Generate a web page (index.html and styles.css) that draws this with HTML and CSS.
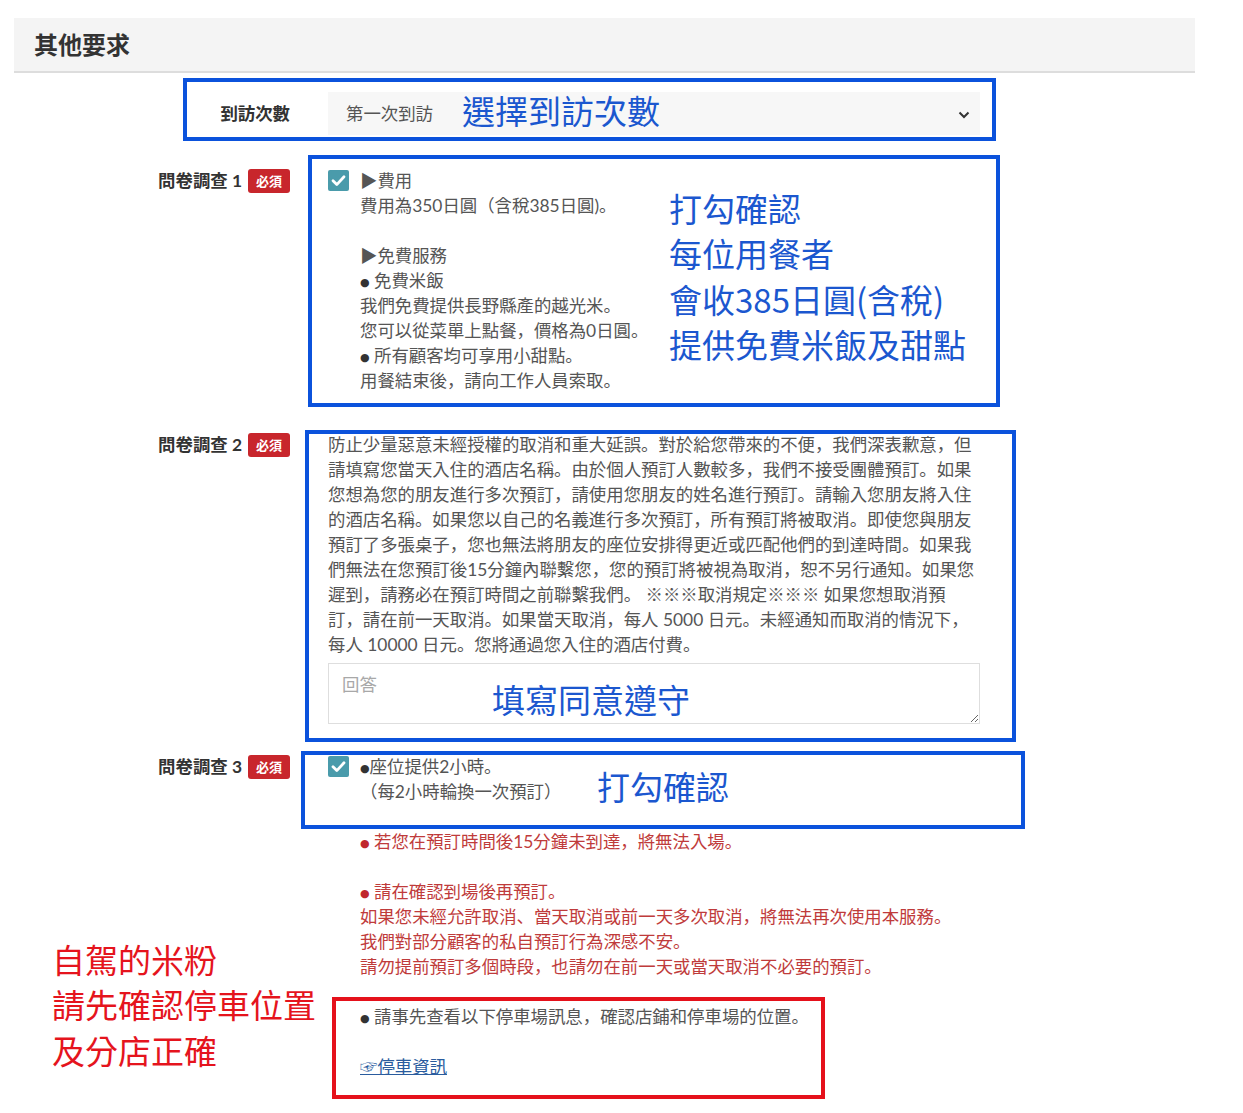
FILE: index.html
```html
<!DOCTYPE html>
<html lang="zh-Hant">
<head>
<meta charset="utf-8">
<title>其他要求</title>
<link rel="stylesheet" href="styles.css">
</head>
<body>
<div class="page">
  <div class="section-head"><h2 class="section-title">其他要求</h2></div>

  <div class="form">
    <div class="row row-visit">
      <div class="label">到訪次數</div>
      <div class="content">
        <div class="select">
          <span class="select-value">第一次到訪</span>
          <svg class="chev" width="12" height="8" viewBox="0 0 12 8"><path d="M1.5 1.5 L6 6 L10.5 1.5" fill="none" stroke="#333" stroke-width="2"/></svg>
        </div>
      </div>
    </div>

    <div class="row row-q1">
      <div class="label">問卷調查 1<span class="badge">必須</span></div>
      <div class="content check-row">
        <span class="checkbox"><svg width="21" height="21" viewBox="0 0 21 21"><path d="M5 10.8 L8.8 14.6 L16 6.8" fill="none" stroke="#fff" stroke-width="2.8" stroke-linecap="round" stroke-linejoin="round"/></svg></span>
        <div class="text">
          <div>▶費用</div>
          <div>費用為350日圓（含稅385日圓)。</div>
          <div class="blank"></div>
          <div>▶免費服務</div>
          <div><span class="dot">●</span> 免費米飯</div>
          <div>我們免費提供長野縣產的越光米。</div>
          <div>您可以從菜單上點餐，價格為0日圓。</div>
          <div><span class="dot">●</span> 所有顧客均可享用小甜點。</div>
          <div>用餐結束後，請向工作人員索取。</div>
        </div>
      </div>
    </div>

    <div class="row row-q2">
      <div class="label">問卷調查 2<span class="badge">必須</span></div>
      <div class="content">
        <p class="para">防止少量惡意未經授權的取消和重大延誤。對於給您帶來的不便，我們深表歉意，但<br>請填寫您當天入住的酒店名稱。由於個人預訂人數較多，我們不接受團體預訂。如果<br>您想為您的朋友進行多次預訂，請使用您朋友的姓名進行預訂。請輸入您朋友將入住<br>的酒店名稱。如果您以自己的名義進行多次預訂，所有預訂將被取消。即使您與朋友<br>預訂了多張桌子，您也無法將朋友的座位安排得更近或匹配他們的到達時間。如果我<br>們無法在您預訂後15分鐘內聯繫您，您的預訂將被視為取消，恕不另行通知。如果您<br>遲到，請務必在預訂時間之前聯繫我們。 ※※※取消規定※※※ 如果您想取消預<br>訂，請在前一天取消。如果當天取消，每人 5000 日元。未經通知而取消的情況下，<br>每人 10000 日元。您將通過您入住的酒店付費。</p>
        <textarea class="answer" placeholder="回答"></textarea>
      </div>
    </div>

    <div class="row row-q3">
      <div class="label">問卷調查 3<span class="badge">必須</span></div>
      <div class="content check-row">
        <span class="checkbox"><svg width="21" height="21" viewBox="0 0 21 21"><path d="M5 10.8 L8.8 14.6 L16 6.8" fill="none" stroke="#fff" stroke-width="2.8" stroke-linecap="round" stroke-linejoin="round"/></svg></span>
        <div class="text">
          <div><span class="dot">●</span>座位提供2小時。</div>
          <div>（每2小時輪換一次預訂）</div>
          <div class="blank"></div>
          <div class="warn"><span class="dot">●</span> 若您在預訂時間後15分鐘未到達，將無法入場。</div>
          <div class="blank"></div>
          <div class="warn"><span class="dot">●</span> 請在確認到場後再預訂。</div>
          <div class="warn">如果您未經允許取消、當天取消或前一天多次取消，將無法再次使用本服務。</div>
          <div class="warn">我們對部分顧客的私自預訂行為深感不安。</div>
          <div class="warn">請勿提前預訂多個時段，也請勿在前一天或當天取消不必要的預訂。</div>
          <div class="blank"></div>
          <div><span class="dot">●</span> 請事先查看以下停車場訊息，確認店鋪和停車場的位置。</div>
          <div class="blank"></div>
          <div><a class="link" href="#">☞停車資訊</a></div>
        </div>
      </div>
    </div>
  </div>

  <!-- annotation overlays -->
  <div class="mark mark-blue box-a"></div>
  <div class="note note-blue note-a">選擇到訪次數</div>

  <div class="mark mark-blue box-b"></div>
  <div class="note note-blue note-b">打勾確認<br>每位用餐者<br>會收385日圓(含稅)<br>提供免費米飯及甜點</div>

  <div class="mark mark-blue box-c"></div>
  <div class="note note-blue note-c">填寫同意遵守</div>

  <div class="mark mark-blue box-d"></div>
  <div class="note note-blue note-d">打勾確認</div>

  <div class="mark mark-red box-e"></div>
  <div class="note note-red note-e">自駕的米粉<br>請先確認停車位置<br>及分店正確</div>
</div>
</body>
</html>
```

FILE: styles.css
```css
* { box-sizing: border-box; }
html, body { margin: 0; padding: 0; background: #fff; }
body {
  font-family: "Lato", "Noto Sans CJK JP", sans-serif;
  font-size: 17.4px;
  color: #555;
  font-feature-settings: "locl" 0;
}
.page {
  position: relative;
  width: 1243px;
  min-height: 1113px;
  padding: 18px 0 0 14px;
}
.section-head {
  width: 1181px;
  height: 55px;
  background: #f4f4f4;
  border-bottom: 2px solid #dddddd;
  padding-left: 20px;
  display: flex;
  align-items: center;
}
.section-title {
  margin: 0;
  font-size: 24px;
  font-weight: 700;
  color: #333;
  font-family: "Noto Sans CJK TC", sans-serif;
  line-height: 1;
  padding-bottom: 2px;
}
.form { display: flex; flex-direction: column; }
.row {
  display: grid;
  grid-template-columns: 276px 652px;
  column-gap: 38px;
  line-height: 25px;
}
.row-visit { margin-top: 19px; align-items: center; }
.row-q1 { margin-top: 33px; }
.row-q2 { margin-top: 39px; }
.row-q3 { margin-top: 30px; }
.label {
  display: flex;
  justify-content: flex-end;
  align-items: center;
  height: 25px;
  font-weight: 700;
  color: #333;
  white-space: nowrap;
}
.badge {
  display: inline-flex;
  align-items: center;
  justify-content: center;
  width: 42px;
  height: 24px;
  margin-left: 6px;
  background: #c8262c;
  color: #fff;
  border-radius: 3px;
  font-size: 13px;
  font-weight: 700;
  font-family: "Noto Sans CJK TC", sans-serif;
}
.select {
  height: 43px;
  background: #f7f7f7;
  display: flex;
  align-items: center;
  justify-content: space-between;
  padding: 0 10px 0 18px;
}
.select-value { color: #555; }
.chev { margin-top: 2px; }
.check-row { display: flex; align-items: flex-start; }
.checkbox {
  flex: none;
  width: 21px;
  height: 21px;
  margin-top: 2px;
  margin-right: 11px;
  background: #4a9bab;
  border-radius: 2px;
  display: block;
}
.checkbox svg { display: block; }
.text div { height: 25px; white-space: nowrap; }
.text .blank { height: 25px; }
.dot {
  font-family: "DejaVu Sans", sans-serif;
  font-size: 11px;
  color: #333;
  vertical-align: 1px;
}
.warn { color: #bf3b3b; }
.warn .dot { color: #c0272d; }
.para {
  margin: 0;
  white-space: nowrap;
  line-height: 25px;
}
.answer {
  display: block;
  width: 652px;
  height: 61px;
  margin-top: 6px;
  border: 1px solid #dedede;
  border-radius: 0;
  padding: 8px 13px;
  font-family: "Lato", "Noto Sans CJK JP", sans-serif;
  font-size: 17.4px;
  line-height: 25px;
  color: #555;
  background: #fff;
}
.answer::placeholder { color: #a8a8a8; }
.link {
  color: #2a5c9e;
  text-decoration: underline;
}

/* annotation overlays */
.mark { position: absolute; border: 4px solid; pointer-events: none; }
.mark-blue { border-color: #0b52dc; }
.mark-red { border-color: #e5111b; }
.box-a { left: 183px; top: 78px; width: 813px; height: 63px; }
.box-b { left: 308px; top: 155px; width: 692px; height: 252px; }
.box-c { left: 305px; top: 430px; width: 711px; height: 312px; }
.box-d { left: 301px; top: 751px; width: 724px; height: 78px; }
.box-e { left: 332px; top: 997px; width: 493px; height: 102px; }
.note {
  position: absolute;
  font-family: "Noto Sans CJK TC", sans-serif;
  font-size: 33px;
  line-height: 45.3px;
  white-space: nowrap;
  font-feature-settings: normal;
}
.note-blue { color: #1b57cf; }
.note-red { color: #e5141d; }
.note-a { left: 462px; top: 88px; }
.note-b { left: 669px; top: 186px; }
.note-c { left: 492px; top: 677px; }
.note-d { left: 597px; top: 764px; }
.note-e { left: 52px; top: 937px; }
```
